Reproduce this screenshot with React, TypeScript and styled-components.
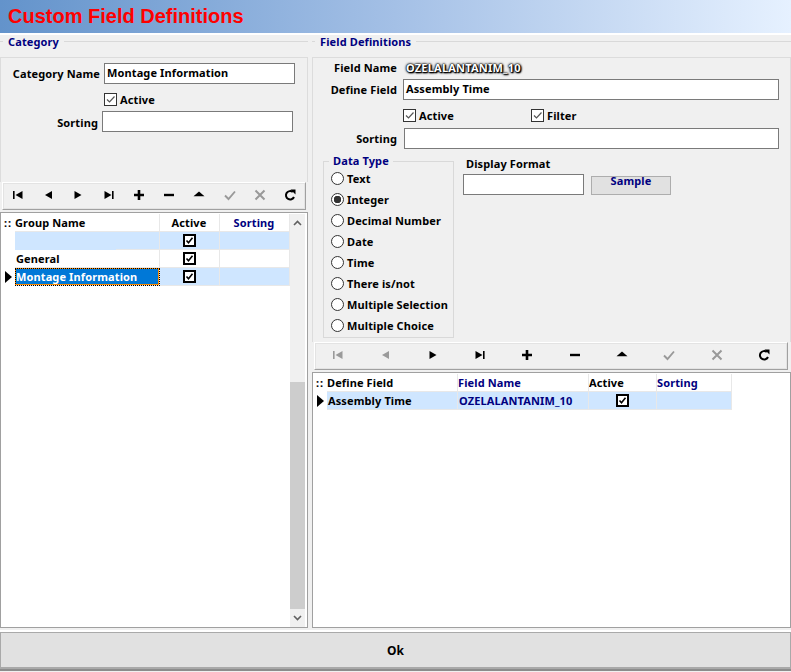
import React from "react";
import styled, { createGlobalStyle } from "styled-components";

const GlobalStyle = createGlobalStyle`
  html, body {
    margin: 0;
    padding: 0;
    background: #f0f0f0;
  }
  * {
    box-sizing: border-box;
  }
`;

const Window = styled.div`
  width: 791px;
  height: 672px;
  display: flex;
  flex-direction: column;
  overflow: hidden;
  background: #f0f0f0;
  color: #000;
  font-family: "Noto Sans", "Liberation Sans", sans-serif;
  font-size: 11px;
  font-weight: 700;
  letter-spacing: 0.12px;
`;

const Header = styled.div`
  height: 35px;
  flex: none;
  padding: 0 8px;
  display: flex;
  align-items: center;
  background: linear-gradient(90deg, #6393cb 0%, #a4c0e6 50%, #e6f1ff 100%);
  background-clip: padding-box;
  border-bottom: 2px solid #fff;
  color: #ff0000;
  font-size: 20px;
  font-family: "Liberation Sans", sans-serif;
  font-weight: 700;
  letter-spacing: 0;
`;

const Columns = styled.div`
  height: 597px;
  flex: none;
  padding-bottom: 4px;
  display: grid;
  grid-template-columns: 308px 479px;
  column-gap: 4px;
`;

const Column = styled.div`
  display: flex;
  flex-direction: column;
  min-height: 0;
`;

const Legend = styled.div`
  height: 13px;
  flex: none;
  display: flex;
  align-items: center;
  gap: 5px;
  color: #000080;
  line-height: 13px;
  &::before {
    content: "";
    width: 3px;
    border-top: 1px solid #d9d9d9;
  }
  &::after {
    content: "";
    flex: 1;
    border-top: 1px solid #d9d9d9;
  }
`;

const FormPanel = styled.div<{ $height: number }>`
  height: ${(p) => p.$height}px;
  flex: none;
  margin-top: 9px;
  border: 1px solid #dcdcdc;
  border-bottom: 0;
`;

const Row = styled.div<{ $top: number; $label: number; $gap: number; $drop?: number }>`
  display: flex;
  align-items: center;
  margin-top: ${(p) => p.$top}px;
  gap: ${(p) => p.$gap}px;
  & > label {
    width: ${(p) => p.$label}px;
    flex: none;
    padding-top: ${(p) => p.$drop ?? 0}px;
    text-align: right;
    line-height: 15px;
  }
`;

const TextBox = styled.div<{ $width: number }>`
  width: ${(p) => p.$width}px;
  height: 21px;
  flex: none;
  padding: 0 2px 2px;
  display: flex;
  align-items: center;
  background: #fff;
  border: 1px solid #7a7a7a;
`;

const CheckRow = styled.div<{ $top: number; $left: number; $bottom?: number }>`
  display: flex;
  align-items: center;
  height: 15px;
  margin-top: ${(p) => p.$top}px;
  margin-bottom: ${(p) => p.$bottom ?? 0}px;
  padding-left: ${(p) => p.$left}px;
`;

const CheckLabel = styled.span<{ $width?: number }>`
  display: inline-flex;
  align-items: center;
  gap: 3px;
  width: ${(p) => (p.$width ? `${p.$width}px` : "auto")};
`;

const CheckBoxFrame = styled.span`
  width: 13px;
  height: 13px;
  display: inline-flex;
  background: #fff;
  border: 1px solid #333;
`;

const FieldNameValue = styled.span`
  color: #fff;
  line-height: 15px;
  letter-spacing: 0.2px;
  text-shadow: 0 0 2px #000, 1px 1px 2px #000, 0 0 1px #000, 1px 1px 1px #000, 0 0 3px #000;
`;

const NavBar = styled.div<{ $padding: number; $right: number }>`
  height: 28px;
  flex: none;
  margin: 0 ${(p) => p.$right}px 0 2px;
  padding: 0 ${(p) => p.$padding}px 2px;
  display: flex;
  align-items: center;
  justify-content: space-between;
  background: #f0f0f0;
  border: 1px solid #fff;
  border-right-color: #a0a0a0;
  border-bottom-color: #a0a0a0;
  box-shadow: 0 0 0 1px #e3e3e3 inset;
`;

const NavIcon = styled.svg`
  width: 14px;
  height: 14px;
  display: block;
`;

const GridFrame = styled.div`
  flex: 1;
  min-height: 0;
  margin-top: 2px;
  display: flex;
  background: #fff;
  border: 1px solid #a0a0a0;
`;

const GridBody = styled.div`
  flex: 1;
  min-width: 0;
`;

const GridRow = styled.div<{ $columns: string; $tinted?: boolean }>`
  display: grid;
  grid-template-columns: ${(p) => p.$columns};
  height: 18px;
  position: relative;
  background: ${(p) => (p.$tinted ? "#cfe6ff" : "#fff")};
`;

const Indicator = styled.div`
  display: flex;
  align-items: center;
  justify-content: center;
  background: #fff;
`;

const Cell = styled.div<{ $center?: boolean; $navy?: boolean; $selected?: boolean; $tinted?: boolean }>`
  display: flex;
  align-items: center;
  justify-content: ${(p) => (p.$center ? "center" : "flex-start")};
  padding: 0 1px;
  overflow: hidden;
  white-space: nowrap;
  border-right: 1px solid #e8e8e8;
  border-bottom: 1px solid #e8e8e8;
  color: ${(p) => (p.$selected ? "#fff" : p.$navy ? "#000080" : "#000")};
  background: ${(p) => (p.$selected ? "#0078d7" : p.$tinted ? "#cfe6ff" : "transparent")};
  box-shadow: ${(p) => (p.$selected ? "inset 0 0 0 1px #ff8c00" : "none")};
  outline: ${(p) => (p.$selected ? "1px dotted #000" : "none")};
  outline-offset: -1px;
`;

const HeadRow = styled(GridRow)`
  height: 19px;
  padding-top: 1px;
  background: #fff;
  & > div {
    padding-left: 0;
  }
`;

const Smudge = styled.span`
  position: absolute;
  left: 14px;
  bottom: 0;
  width: 101px;
  height: 1px;
  background: #cfe6ff;
`;

const GridMark = styled.span`
  letter-spacing: 1px;
  line-height: 10px;
`;

const GridCheck = styled.span`
  width: 13px;
  height: 13px;
  display: inline-flex;
  background: #fff;
  border: 2px solid #000;
`;

const Scrollbar = styled.div`
  width: 15px;
  flex: none;
  margin: 1px 2px 0 0;
  display: flex;
  flex-direction: column;
  background: #f0f0f0;
`;

const ScrollButton = styled.div`
  height: 18px;
  flex: none;
  display: flex;
  align-items: center;
  justify-content: center;
`;

const ScrollTrack = styled.div`
  flex: 1;
  display: flex;
  flex-direction: column;
  justify-content: flex-end;
`;

const ScrollThumb = styled.div`
  height: 227px;
  background: #cdcdcd;
`;

const SplitRow = styled.div`
  display: flex;
`;

const DataTypeBox = styled.div`
  width: 131px;
  height: 177px;
  margin-top: 12px;
  margin-left: 10px;
  padding-top: 6px;
  border: 1px solid #d9d9d9;
  position: relative;
`;

const DataTypeLegend = styled.span`
  position: absolute;
  top: -8px;
  left: 5px;
  padding: 0 4px;
  background: #f0f0f0;
  color: #000080;
  line-height: 14px;
`;

const RadioRow = styled.div`
  height: 21px;
  display: flex;
  align-items: center;
  gap: 3px;
  padding-left: 7px;
`;

const RadioCircle = styled.span<{ $on?: boolean }>`
  width: 13px;
  height: 13px;
  flex: none;
  border-radius: 50%;
  border: 1px solid #333;
  background: ${(p) => (p.$on ? "radial-gradient(circle, #333 0 3.5px, #fff 4px)" : "#fff")};
`;

const FormatBox = styled.div`
  margin-left: 9px;
  margin-top: 8px;
`;

const FormatTitle = styled.div`
  padding-left: 3px;
  margin-bottom: 3px;
  line-height: 14px;
`;

const FormatControls = styled.div`
  display: flex;
  gap: 7px;
`;

const SampleButton = styled.div`
  width: 80px;
  height: 19px;
  margin-top: 2px;
  padding-bottom: 11px;
  display: flex;
  align-items: center;
  justify-content: center;
  color: #000080;
  background: #e1e1e1;
  border: 1px solid #adadad;
`;

const Footer = styled.div`
  height: 36px;
  flex: none;
  display: flex;
  align-items: center;
  justify-content: center;
  background: #e1e1e1;
  border: 1px solid #a9a9a9;
  box-shadow: 0 -2px 0 #fff, 0 1px 0 #a9a9a9, 0 3px 0 #8c8c8c;
  font-size: 12px;
`;

const Tick = () => (
  <svg width="11" height="11" viewBox="0 0 11 11">
    <path d="M2 5.5 L4.5 8 L9.5 2.5" fill="none" stroke="#555" strokeWidth="1.2" />
  </svg>
);

const GridTick = () => (
  <svg width="9" height="9" viewBox="0 0 9 9">
    <path d="M1.5 4.5 L3.5 6.8 L7.5 1.8" fill="none" stroke="#000" strokeWidth="1.6" />
  </svg>
);

const Pointer = () => (
  <svg width="7" height="12" viewBox="0 0 7 12">
    <path d="M0 0 L7 6 L0 12 Z" fill="#000" />
  </svg>
);

const navPaths: { [key: string]: React.ReactNode } = {
  first: <path d="M2 3h1.6v8H2zM11.5 3v8L4.5 7z" />,
  prev: <path d="M11 3v8L4 7z" />,
  next: <path d="M3.5 3v8l7-4z" />,
  last: <path d="M2.5 3v8l7-4zM10 3h1.6v8H10z" />,
  plus: <path d="M5.7 2h2.6v3.7H12v2.6H8.3V12H5.7V8.3H2V5.7h3.7z" />,
  minus: <path d="M2 5.8h10v2.4H2z" />,
  up: <path d="M7 3.4l5.5 4.8h-11z" />,
};

const NavButton = ({ name, disabled }: { name: string; disabled?: boolean }) => {
  const color = disabled ? "#9a9a9a" : "#000";
  if (name === "post") {
    return (
      <NavIcon viewBox="0 0 14 14">
        <path d="M2 7.5 L5.5 11 L12 3.5" fill="none" stroke="#999" strokeWidth="1.9" />
      </NavIcon>
    );
  }
  if (name === "cancel") {
    return (
      <NavIcon viewBox="0 0 14 14">
        <path d="M2.5 2.5 L11.5 11.5 M11.5 2.5 L2.5 11.5" fill="none" stroke="#999" strokeWidth="2" />
      </NavIcon>
    );
  }
  if (name === "refresh") {
    return (
      <NavIcon viewBox="0 0 14 14">
        <path d="M11 9 A4.2 4.2 0 1 1 9.8 4" fill="none" stroke="#000" strokeWidth="2" />
        <path d="M7.5 1.5 H12.5 V6.5 Z" fill="#000" />
      </NavIcon>
    );
  }
  return (
    <NavIcon viewBox="0 0 14 14" fill={color}>
      {navPaths[name]}
    </NavIcon>
  );
};

const Navigator = ({ padding, right, disabledStart }: { padding: number; right: number; disabledStart?: boolean }) => (
  <NavBar $padding={padding} $right={right}>
    {["first", "prev", "next", "last", "plus", "minus", "up", "post", "cancel", "refresh"].map((name) => (
      <NavButton key={name} name={name} disabled={disabledStart && (name === "first" || name === "prev")} />
    ))}
  </NavBar>
);

const ActiveCell = ({ tinted }: { tinted?: boolean }) => (
  <Cell $center $tinted={tinted}>
    <GridCheck>
      <GridTick />
    </GridCheck>
  </Cell>
);

const categoryColumns = "14px 145px 60px 70px";
const fieldColumns = "14px 131px 131px 68px 75px";
const dataTypes = ["Text", "Integer", "Decimal Number", "Date", "Time", "There is/not", "Multiple Selection", "Multiple Choice"];

export default function App() {
  return (
    <Window>
      <GlobalStyle />
      <Header>Custom Field Definitions</Header>
      <Columns>
        <Column>
          <Legend>Category</Legend>
          <FormPanel $height={125}>
            <Row $top={5} $label={99} $gap={4}>
              <label>Category Name</label>
              <TextBox $width={191}>Montage Information</TextBox>
            </Row>
            <CheckRow $top={8} $left={103} $bottom={1}>
              <CheckLabel>
                <CheckBoxFrame>
                  <Tick />
                </CheckBoxFrame>
                Active
              </CheckLabel>
            </CheckRow>
            <Row $top={4} $label={97} $gap={4} $drop={2}>
              <label>Sorting</label>
              <TextBox $width={191}></TextBox>
            </Row>
          </FormPanel>
          <Navigator padding={8} right={2} />
          <GridFrame>
            <GridBody>
              <HeadRow $columns={categoryColumns}>
                <Indicator>
                  <GridMark>::</GridMark>
                </Indicator>
                <Cell>Group Name</Cell>
                <Cell $center>Active</Cell>
                <Cell $center $navy>Sorting</Cell>
              </HeadRow>
              <GridRow $columns={categoryColumns} $tinted>
                <Indicator />
                <Cell />
                <ActiveCell />
                <Cell />
                <Smudge />
              </GridRow>
              <GridRow $columns={categoryColumns}>
                <Indicator />
                <Cell>General</Cell>
                <ActiveCell />
                <Cell />
              </GridRow>
              <GridRow $columns={categoryColumns} $tinted>
                <Indicator>
                  <Pointer />
                </Indicator>
                <Cell $selected>Montage Information</Cell>
                <ActiveCell />
                <Cell />
              </GridRow>
            </GridBody>
            <Scrollbar>
              <ScrollButton>
                <svg width="9" height="6" viewBox="0 0 9 6">
                  <path d="M1 5 L4.5 1.5 L8 5" fill="none" stroke="#606060" strokeWidth="1.6" />
                </svg>
              </ScrollButton>
              <ScrollTrack>
                <ScrollThumb />
              </ScrollTrack>
              <ScrollButton>
                <svg width="9" height="6" viewBox="0 0 9 6">
                  <path d="M1 1 L4.5 4.5 L8 1" fill="none" stroke="#606060" strokeWidth="1.6" />
                </svg>
              </ScrollButton>
            </Scrollbar>
          </GridFrame>
        </Column>
        <Column>
          <Legend>Field Definitions</Legend>
          <FormPanel $height={285}>
            <Row $top={2} $label={84} $gap={9}>
              <label>Field Name</label>
              <FieldNameValue>OZELALANTANIM_10</FieldNameValue>
            </Row>
            <Row $top={4} $label={84} $gap={6}>
              <label>Define Field</label>
              <TextBox $width={376}>Assembly Time</TextBox>
            </Row>
            <CheckRow $top={8} $left={90}>
              <CheckLabel $width={128}>
                <CheckBoxFrame>
                  <Tick />
                </CheckBoxFrame>
                Active
              </CheckLabel>
              <CheckLabel>
                <CheckBoxFrame>
                  <Tick />
                </CheckBoxFrame>
                Filter
              </CheckLabel>
            </CheckRow>
            <Row $top={5} $label={84} $gap={7}>
              <label>Sorting</label>
              <TextBox $width={375}></TextBox>
            </Row>
            <SplitRow>
              <DataTypeBox>
                <DataTypeLegend>Data Type</DataTypeLegend>
                {dataTypes.map((label) => (
                  <RadioRow key={label}>
                    <RadioCircle $on={label === "Integer"} />
                    {label}
                  </RadioRow>
                ))}
              </DataTypeBox>
              <FormatBox>
                <FormatTitle>Display Format</FormatTitle>
                <FormatControls>
                  <TextBox $width={121}></TextBox>
                  <SampleButton>Sample</SampleButton>
                </FormatControls>
              </FormatBox>
            </SplitRow>
          </FormPanel>
          <Navigator padding={16} right={3} disabledStart />
          <GridFrame>
            <GridBody>
              <HeadRow $columns={fieldColumns}>
                <Indicator>
                  <GridMark>::</GridMark>
                </Indicator>
                <Cell>Define Field</Cell>
                <Cell $navy>Field Name</Cell>
                <Cell>Active</Cell>
                <Cell $navy>Sorting</Cell>
              </HeadRow>
              <GridRow $columns={fieldColumns}>
                <Indicator>
                  <Pointer />
                </Indicator>
                <Cell $tinted>Assembly Time</Cell>
                <Cell $navy $tinted>OZELALANTANIM_10</Cell>
                <ActiveCell tinted />
                <Cell $tinted />
              </GridRow>
            </GridBody>
          </GridFrame>
        </Column>
      </Columns>
      <Footer>Ok</Footer>
    </Window>
  );
}
